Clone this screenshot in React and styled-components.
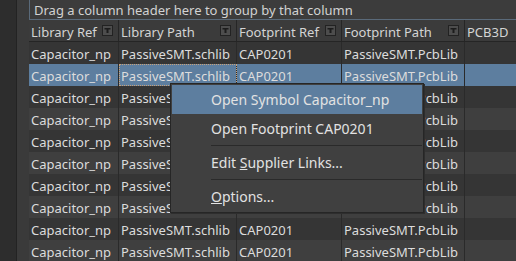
import React from 'react';
import styled, { createGlobalStyle } from 'styled-components';

const GlobalStyle = createGlobalStyle`
  html, body {
    margin: 0;
    padding: 0;
    background: #2c2c2c;
  }
  * {
    box-sizing: border-box;
  }
`

const Screen = styled.div`
  position: relative;
  width: 516px;
  height: 261px;
  overflow: hidden;
  display: flex;
  font-family: "Noto Sans", "Open Sans", sans-serif;
  font-size: 13px;
  color: #d6d6d6;
  background: #2c2c2c;
`

const LeftStrip = styled.div`
  width: 17px;
  background: #2d2d2d;
  border-right: 1px solid #232323;
`

const Gutter = styled.div`
  width: 12px;
  background: #3a3a3a;
`

const Grid = styled.div`
  flex: 1;
  display: flex;
  flex-direction: column;
  min-width: 0;
`

const GroupPanel = styled.div`
  height: 26px;
  display: flex;
  align-items: center;
  padding: 1px 0 0 4px;
  background: #3c3c3c;
  border-left: 1px solid #5a6a7a;
  border-bottom: 1px solid #5a6a7a;
  white-space: nowrap;
  color: #d2d2d2;
`

const columns = '90px 118px 105px 123px 1fr'

const HeaderRow = styled.div`
  display: grid;
  grid-template-columns: ${columns};
  height: 25px;
  background: #3b3b3b;
  border-bottom: 1px solid #252525;
`

const HeaderCell = styled.div`
  display: flex;
  align-items: center;
  justify-content: space-between;
  padding: 0 5px 0 2px;
  border-right: ${p => (p.$last ? 'none' : '1px solid #262626')};
  white-space: nowrap;
  overflow: hidden;
  color: #d4d4d4;

  & > span {
    padding-top: 3px;
  }
`

const Row = styled.div`
  display: grid;
  grid-template-columns: ${columns};
  height: 22px;
  flex-shrink: 0;
  background: ${p => (p.$selected ? '#5d7e9f' : p.$odd ? '#353535' : '#3f3f3f')};
`

const Cell = styled.div`
  display: flex;
  align-items: center;
  padding: 2px 0 0 2px;
  border-right: ${p => (p.$last ? 'none' : '1px solid #2a2a2a')};
  white-space: nowrap;
  overflow: hidden;
  color: #dcdcdc;
  outline: ${p => (p.$focus ? '1px dotted #c9a27a' : 'none')};
  outline-offset: -1px;
`

const Menu = styled.div`
  position: absolute;
  left: 170px;
  top: 83px;
  width: 254px;
  padding: 1px;
  background: #404040;
  border: 1px solid #262626;
  box-shadow: 1px 1px 0 #2e2e2e;
  font-size: 14px;
`

const MenuItem = styled.div`
  height: 29px;
  display: flex;
  align-items: center;
  padding-left: 39px;
  color: #e2e2e2;
  background: ${p => (p.$active ? '#5d7e9f' : 'transparent')};
  white-space: nowrap;
`

const Separator = styled.div`
  height: 1px;
  margin: 2px 0 2px 39px;
  background: #2a2a2a;
`

const Key = styled.span`
  text-decoration: underline;
`

const FilterIcon = () => (
  <svg width="11" height="11" viewBox="0 0 11 11">
    <rect x="0.5" y="0.5" width="10" height="10" fill="#4d4d4d" stroke="#222" />
    <path d="M2.5 3h6v1.5h-2v3.5h-2v-3.5h-2z" fill="#1c1c1c" />
  </svg>
)

const headers = ['Library Ref', 'Library Path', 'Footprint Ref', 'Footprint Path', 'PCB3D']
const rows = Array.from({ length: 10 }, () => ['Capacitor_np', 'PassiveSMT.schlib', 'CAP0201', 'PassiveSMT.PcbLib', ''])

export default function App() {
  return (
    <>
      <GlobalStyle />
      <Screen>
        <LeftStrip />
        <Gutter />
        <Grid>
          <GroupPanel>Drag a column header here to group by that column</GroupPanel>
          <HeaderRow>
            {headers.map((h, i) => (
              <HeaderCell key={h} $last={i === headers.length - 1}>
                <span>{h}</span>
                {i < headers.length - 1 && <FilterIcon />}
              </HeaderCell>
            ))}
          </HeaderRow>
          {rows.map((r, ri) => (
            <Row key={ri} $odd={ri % 2 === 0} $selected={ri === 1}>
              {r.map((c, ci) => (
                <Cell key={ci} $last={ci === r.length - 1} $focus={ri === 1 && ci === 1}>
                  {c}
                </Cell>
              ))}
            </Row>
          ))}
        </Grid>
        <Menu>
          <MenuItem $active><span>Open Symbol Capacitor_np</span></MenuItem>
          <MenuItem><span>Open Footprint CAP0201</span></MenuItem>
          <Separator />
          <MenuItem><span>Edit <Key>S</Key>upplier Links...</span></MenuItem>
          <Separator />
          <MenuItem><span><Key>O</Key>ptions...</span></MenuItem>
        </Menu>
      </Screen>
    </>
  )
}
